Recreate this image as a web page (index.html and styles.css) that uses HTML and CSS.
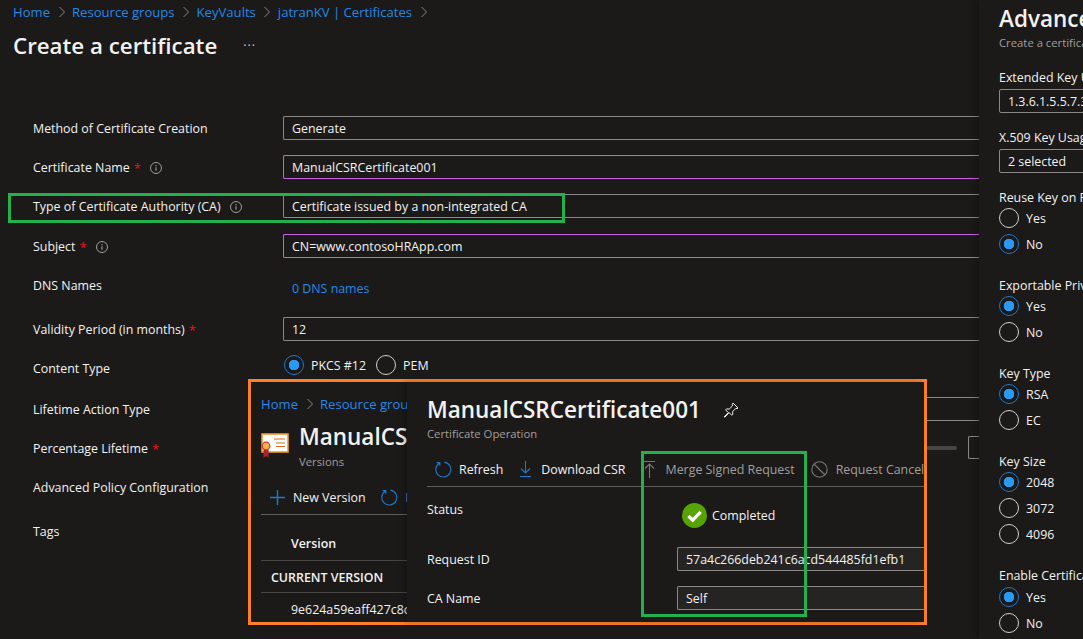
FILE: index.html
```html
<!DOCTYPE html>
<html lang="en">
<head>
<meta charset="utf-8">
<title>Create a certificate</title>
<link rel="stylesheet" href="styles.css">
</head>
<body>
<svg class="defs" width="0" height="0" aria-hidden="true">
  <symbol id="chev" viewBox="0 0 8 12"><path d="M1.5 1l5 5-5 5" fill="none" stroke="#8a8886" stroke-width="1"/></symbol>
  <symbol id="info" viewBox="0 0 12 12"><circle cx="6" cy="6" r="5.5" fill="none" stroke="#a19f9d"/><path d="M6 5.2v3.6M6 3v1.2" stroke="#a19f9d" stroke-width="1.1"/></symbol>
  <symbol id="refresh" viewBox="0 0 17 17"><path d="M4.2 2.2A7.5 7.5 0 1 0 9.5 1.1M1.6 1.6h3.2v3.2" fill="none" stroke="#1f78c8" stroke-width="1.1"/></symbol>
  <symbol id="cert" viewBox="0 0 28 26"><rect x="1" y="1" width="26" height="18" fill="#fff" stroke="#f0962a" stroke-width="1.6"/><path d="M13 6h11M15 10h9M15 13.5h9" stroke="#d9661f" stroke-width="1.2"/><path d="M2.5 16v9l2.5-2 2.5 2v-9z" fill="#a4262c"/><circle cx="5" cy="13" r="3.8" fill="#f7b548" stroke="#d13438" stroke-width="1.2"/></symbol>
</svg>

<div class="page">
  <main class="main">
    <nav class="crumbs">
      <a class="link">Home</a><svg class="chev"><use href="#chev"/></svg>
      <a class="link">Resource groups</a><svg class="chev"><use href="#chev"/></svg>
      <a class="link">KeyVaults</a><svg class="chev"><use href="#chev"/></svg>
      <a class="link">jatranKV | Certificates</a><svg class="chev"><use href="#chev"/></svg>
    </nav>
    <header class="title-row">
      <h1 class="title">Create a certificate</h1>
      <span class="more">···</span>
    </header>
    <section class="form">
      <div class="label">Method of Certificate Creation</div>
      <div class="input">Generate</div>

      <div class="label">Certificate Name <span class="req">*</span><svg class="info"><use href="#info"/></svg></div>
      <div class="input input-req">ManualCSRCertificate001</div>

      <div class="label">Type of Certificate Authority (CA)<svg class="info"><use href="#info"/></svg></div>
      <div class="input">Certificate issued by a non-integrated CA</div>

      <div class="label">Subject <span class="req">*</span><svg class="info"><use href="#info"/></svg></div>
      <div class="input input-req">CN=www.contosoHRApp.com</div>

      <div class="label label-short">DNS Names</div>
      <a class="link dns">0 DNS names</a>

      <div class="label">Validity Period (in months) <span class="req">*</span></div>
      <div class="input">12</div>

      <div class="label label-short">Content Type</div>
      <div class="radios-inline">
        <span class="radio on">PKCS #12</span>
        <span class="radio">PEM</span>
      </div>

      <div class="label">Lifetime Action Type</div>
      <div class="input"></div>

      <div class="label">Percentage Lifetime <span class="req">*</span></div>
      <div class="slider"><span class="track"></span><span class="slider-box"></span></div>

      <div class="label">Advanced Policy Configuration</div>
      <div></div>

      <div class="label">Tags</div>
      <div></div>
    </section>
  </main>

  <aside class="panel">
    <h2 class="panel-title">Advanced Policy Configuration</h2>
    <p class="sub">Create a certificate policy</p>
    <div class="group g-eku">
      <div class="plabel">Extended Key Usages (EKUs)</div>
      <div class="input">1.3.6.1.5.5.7.3.1, 1.3.6.1.5.5.7.3.2</div>
    </div>
    <div class="group g-tight">
      <div class="plabel">X.509 Key Usage Flags</div>
      <div class="input">2 selected</div>
    </div>
    <div class="group g-tight">
      <div class="plabel">Reuse Key on Renewal?</div>
      <span class="radio">Yes</span><span class="radio on">No</span>
    </div>
    <div class="group g-radio">
      <div class="plabel">Exportable Private Key?</div>
      <span class="radio on">Yes</span><span class="radio">No</span>
    </div>
    <div class="group g-radio">
      <div class="plabel">Key Type</div>
      <span class="radio on">RSA</span><span class="radio">EC</span>
    </div>
    <div class="group g-radio">
      <div class="plabel">Key Size</div>
      <span class="radio on">2048</span><span class="radio">3072</span><span class="radio">4096</span>
    </div>
    <div class="group g-radio g-enable">
      <div class="plabel">Enable Certificate Transparency</div>
      <span class="radio on">Yes</span><span class="radio">No</span>
    </div>
  </aside>

  <section class="inset">
    <div class="versions">
      <nav class="v-crumbs"><a class="link">Home</a><svg class="chev"><use href="#chev"/></svg><a class="link">Resource groups</a></nav>
      <div class="v-head">
        <svg class="cert"><use href="#cert"/></svg>
        <div class="v-head-text">
          <div class="blade-title">ManualCSRCertificate001</div>
          <p class="sub">Versions</p>
        </div>
      </div>
      <div class="toolbar v-toolbar">
        <svg class="ico-plus" viewBox="0 0 15 15"><path d="M7.5 0v15M0 7.5h15" stroke="#1f78c8" stroke-width="1.4"/></svg>
        <span class="tool-text">New Version</span>
        <svg class="ico v-refresh"><use href="#refresh"/></svg>
        <span class="tool-text">Refresh</span>
      </div>
      <div class="v-cell v-version">Version</div>
      <div class="v-cell v-current">CURRENT VERSION</div>
      <div class="v-cell v-id">9e624a59eaff427c8c6e</div>
    </div>
    <div class="operation">
      <div class="op-head">
        <div class="blade-title">ManualCSRCertificate001</div>
        <svg class="pin" viewBox="0 0 16 16"><path d="M10 1l5 5-1 .6-1.2-.2-3.2 3.3.2 2.6-1 1-2.7-2.7L2 15l-.9-.1 4.2-4.3-2.7-2.7 1-1 2.6.2 3.3-3.2-.2-1.2z" fill="none" stroke="#f3f2f1" stroke-width="1"/></svg>
      </div>
      <p class="sub">Certificate Operation</p>
      <div class="toolbar op-toolbar">
        <svg class="ico"><use href="#refresh"/></svg>
        <span class="tool-text t-refresh">Refresh</span>
        <svg class="ico-down" viewBox="0 0 11 16"><path d="M5.5 0v12M1 7.5l4.5 4.5L10 7.5M0 15.5h11" fill="none" stroke="#1f78c8" stroke-width="1.1"/></svg>
        <span class="tool-text t-download">Download CSR</span>
        <svg class="ico-up" viewBox="0 0 11 17"><path d="M0 .5h11M5.5 17V3M1 7.5L5.5 3 10 7.5" fill="none" stroke="#797775" stroke-width="1.1"/></svg>
        <span class="tool-text off t-merge">Merge Signed Request</span>
        <svg class="ico-cancel" viewBox="0 0 17 17"><circle cx="8.5" cy="8.5" r="7.7" fill="none" stroke="#797775" stroke-width="1.1"/><path d="M3 3l11 11" stroke="#797775" stroke-width="1.1"/></svg>
        <span class="tool-text off">Request Cancellation</span>
      </div>
      <div class="op-grid">
        <div class="op-label l-status">Status</div>
        <div class="status">
          <svg class="check" viewBox="0 0 25 25"><circle cx="12.5" cy="12.5" r="12.5" fill="#57a300"/><path d="M6.5 13l4.2 4.2 8-8.4" fill="none" stroke="#fff" stroke-width="3.2"/></svg>
          <span>Completed</span>
        </div>
        <div class="op-label">Request ID</div>
        <div class="input input-fill">57a4c266deb241c6acd544485fd1efb1</div>
        <div class="op-label">CA Name</div>
        <div class="input input-fill">Self</div>
      </div>
    </div>
  </section>

  <div class="mark mark-type"></div>
  <div class="mark mark-merge"></div>
</div>
</body>
</html>
```
FILE: styles.css
```css
* { box-sizing: border-box; }
html, body { margin: 0; height: 100%; overflow: hidden; }
body {
  background: #1b1a19;
  color: #f3f2f1;
  font-family: "Open Sans", "Noto Sans", "Liberation Sans", sans-serif;
  font-size: 12.4px;
  line-height: 16px;
}
.defs { position: absolute; }
.page { position: relative; display: flex; width: 1083px; height: 639px; overflow: hidden; }
.main { flex: 1; min-width: 0; overflow: hidden; }
.link { color: #2388e8; }

.crumbs { display: flex; align-items: center; height: 24px; padding-left: 13px; font-size: 13.1px; }
.chev { width: 8px; height: 12px; margin: 0 6.5px 0 7.5px; flex: none; }

.title-row { display: flex; align-items: center; height: 44px; padding-left: 13px; }
.title { margin: 0; font-size: 22.3px; line-height: 32px; font-weight: 600; white-space: nowrap; }
.more { margin-left: 26px; color: #c8c6c4; letter-spacing: 1px; }

.form {
  display: grid;
  grid-template-columns: 250px 1fr;
  grid-template-rows: 39px 39px 40px 40px 43px 40px 40px 39px 39px 44px 40px;
  margin-top: 48px;
  padding-left: 33px;
}
.label { display: flex; align-items: center; height: 25px; white-space: nowrap; }
.label-short { height: 23px; }
.req { color: #e81123; margin-left: 4px; font-size: 13px; }
.info { width: 12px; height: 12px; margin-left: 9px; }
.input {
  height: 24px;
  padding: 1px 8px 0;
  border: 1px solid #8a8886;
  border-radius: 2px;
  line-height: 22px;
  white-space: nowrap;
  overflow: hidden;
}
.input-req { border-color: #cc5fe8; }
.input-fill { background: #252423; }
.form .input { border-right: 0; border-radius: 2px 0 0 2px; }
.dns { padding: 7px 0 0 9px; }

.radio { display: flex; align-items: center; height: 26px; padding-top: 2px; white-space: nowrap; }
.radio::before {
  content: "";
  flex: none;
  width: 18px;
  height: 18px;
  margin: -2px 7px 0 0;
  border: 1.5px solid #d2d0ce;
  border-radius: 50%;
}
.radio.on::before {
  border-color: #1f78c8;
  background: radial-gradient(circle, #2899f5 0 5px, transparent 5.5px);
}
.radios-inline { display: flex; gap: 10px; margin: -5px 0 0 1px; }

.slider { display: flex; align-items: center; gap: 11px; height: 23px; overflow: hidden; }
.track { flex: 1; height: 4px; background: #484644; border-radius: 2px; }
.slider-box { flex: none; width: 11px; height: 23px; border: 1px solid #8a8886; border-right: 0; border-radius: 2px 0 0 2px; }

.panel {
  flex: none;
  width: 104px;
  padding: 3px 0 0 20px;
  overflow: hidden;
  background: #1b1a19;
  box-shadow: -3px 0 6px rgba(0, 0, 0, .25);
  z-index: 1;
}
.panel-title { margin: 0; font-size: 22.5px; line-height: 32px; font-weight: 600; white-space: nowrap; }
.sub { margin: 0; color: #a19f9d; font-size: 11.3px; white-space: nowrap; }
.plabel { white-space: nowrap; line-height: 16px; height: 16px; padding-top: 1px; box-sizing: content-box; margin-bottom: -1px; }
.panel .input { width: 120px; }
.panel .plabel + .input { margin-top: 4px; }
.g-eku { margin-top: 18px; }
.g-tight { margin-top: 16px; }
.g-radio { margin-top: 20px; }
.g-enable .plabel { margin-bottom: 0; }

.inset {
  position: absolute;
  left: 248px;
  top: 379px;
  width: 679px;
  height: 246px;
  display: flex;
  background: #1b1a19;
  border: 3px solid #ff7f27;
  z-index: 2;
}
.versions { flex: none; width: 156px; padding-left: 10px; overflow: hidden; }
.v-crumbs { display: flex; align-items: center; height: 20px; margin-top: 12px; white-space: nowrap; overflow: hidden; font-size: 13.1px; }
.v-head { display: flex; gap: 10px; margin-top: 7px; height: 60px; white-space: nowrap; }
.v-head-text { min-width: 0; overflow: hidden; }
.v-head-text .sub { padding-top: 1px; }
.cert { flex: none; width: 28px; height: 26px; margin-top: 12px; }
.blade-title { font-size: 22.5px; line-height: 32px; font-weight: 600; white-space: nowrap; }
.toolbar { display: flex; align-items: center; white-space: nowrap; border-bottom: 1px solid #605e5c; }
.tool-text { margin-top: 2px; }
.v-toolbar { height: 34px; padding: 0 0 1px 9px; }
.ico-plus { width: 15px; height: 15px; flex: none; margin-right: 8px; }
.ico { width: 17px; height: 17px; flex: none; }
.v-refresh { margin: 0 8px 0 15px; }
.v-cell { font-weight: 600; white-space: nowrap; border-bottom: 1px solid #484644; overflow: hidden; }
.v-version { height: 46px; padding: 21px 0 0 30px; }
.v-current { height: 32px; padding: 9px 0 0 10px; }
.v-id { height: 30px; padding: 9px 0 0 30px; font-weight: 400; border: 0; }

.operation { flex: 1; min-width: 0; padding-left: 20px; overflow: hidden; background: #1b1a19; box-shadow: -3px 0 6px rgba(0, 0, 0, .25); z-index: 1; }
.op-head { display: flex; align-items: center; height: 32px; margin-top: 12px; }
.pin { width: 16px; height: 16px; margin-left: 22px; flex: none; }
.op-toolbar { height: 35px; margin-top: 10px; padding-left: 8px; }
.tool-text.off { color: #a19f9d; }
.t-refresh { margin-left: 7px; margin-right: 17px; }
.ico-down { width: 11px; height: 16px; flex: none; margin-right: 10px; }
.t-download { margin-right: 19px; }
.ico-up { width: 11px; height: 17px; flex: none; margin-right: 10px; }
.t-merge { margin-right: 16px; }
.ico-cancel { width: 17px; height: 17px; flex: none; margin-right: 8px; }
.op-grid {
  display: grid;
  grid-template-columns: 250px 1fr;
  grid-template-rows: 60px 39px 39px;
  align-items: start;
}
.op-label { padding-top: 5px; white-space: nowrap; }
.l-status { padding-top: 15px; }
.status { display: flex; align-items: center; gap: 5px; padding: 16px 0 0 5px; }
.check { width: 25px; height: 25px; flex: none; }
.operation .input { border-right: 0; border-radius: 2px 0 0 2px; }

.mark { position: absolute; z-index: 3; pointer-events: none; border: 3px solid #22b14c; }
.mark-type { left: 8px; top: 193px; width: 557px; height: 30px; }
.mark-merge { left: 641px; top: 451px; width: 166px; height: 166px; }
```
